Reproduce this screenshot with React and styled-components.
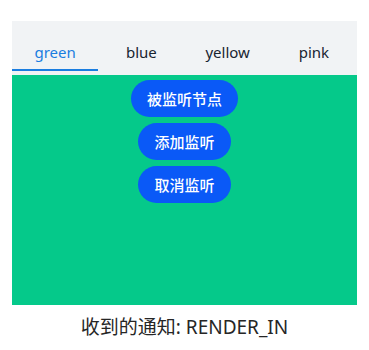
import { useState } from "react";
import styled, { createGlobalStyle } from "styled-components";

const GlobalStyle = createGlobalStyle`
  body {
    margin: 0;
    background: #ffffff;
    font-family: "Noto Sans", "Noto Sans CJK SC", sans-serif;
  }
`;

const tabs = ["green", "blue", "yellow", "pink"];

const App = () => {
  const [active, setActive] = useState(0);
  return (
    <S.Page>
      <GlobalStyle />
      <S.Tabs>
        <S.TabBar>
          {tabs.map((t, i) => (
            <S.Tab key={t} $active={i === active} onClick={() => setActive(i)}>
              {t}
            </S.Tab>
          ))}
        </S.TabBar>
        <S.Content>
          <S.Button>被监听节点</S.Button>
          <S.Button>添加监听</S.Button>
          <S.Button>取消监听</S.Button>
        </S.Content>
      </S.Tabs>
      <S.Notice>收到的通知: RENDER_IN</S.Notice>
    </S.Page>
  );
};

export default App;

const Page = styled.div`
  width: 369px;
  padding: 21px 12px 0;
  box-sizing: border-box;
  display: flex;
  flex-direction: column;
`;
const Tabs = styled.div`
  width: 345px;
  display: flex;
  flex-direction: column;
`;
const TabBar = styled.div`
  height: 54px;
  background: #f1f3f5;
  display: grid;
  grid-template-columns: repeat(4, 1fr);
`;
const Tab = styled.div`
  position: relative;
  display: flex;
  align-items: center;
  justify-content: center;
  padding-top: 7px;
  font-size: 15px;
  color: ${(p) => (p.$active ? "#1a7de0" : "#182431")};
  cursor: pointer;
  &::after {
    content: "";
    position: absolute;
    left: 0;
    right: 0;
    bottom: 4px;
    height: 2px;
    background: ${(p) => (p.$active ? "#1a7de0" : "transparent")};
  }
`;
const Content = styled.div`
  height: 230px;
  background: #05c98a;
  display: flex;
  flex-direction: column;
  align-items: center;
  gap: 6px;
  padding-top: 5px;
  box-sizing: border-box;
`;
const Button = styled.button`
  height: 37px;
  padding: 0 16px;
  border: none;
  border-radius: 19px;
  background: #0a59f7;
  color: #ffffff;
  font-family: "Noto Sans CJK SC", sans-serif;
  font-size: 15px;
  font-weight: 500;
`;
const Notice = styled.div`
  margin-top: 7px;
  text-align: center;
  font-size: 19px;
  color: #262626;
`;

const S = {
  Page,
  Tabs,
  TabBar,
  Tab,
  Content,
  Button,
  Notice,
};
